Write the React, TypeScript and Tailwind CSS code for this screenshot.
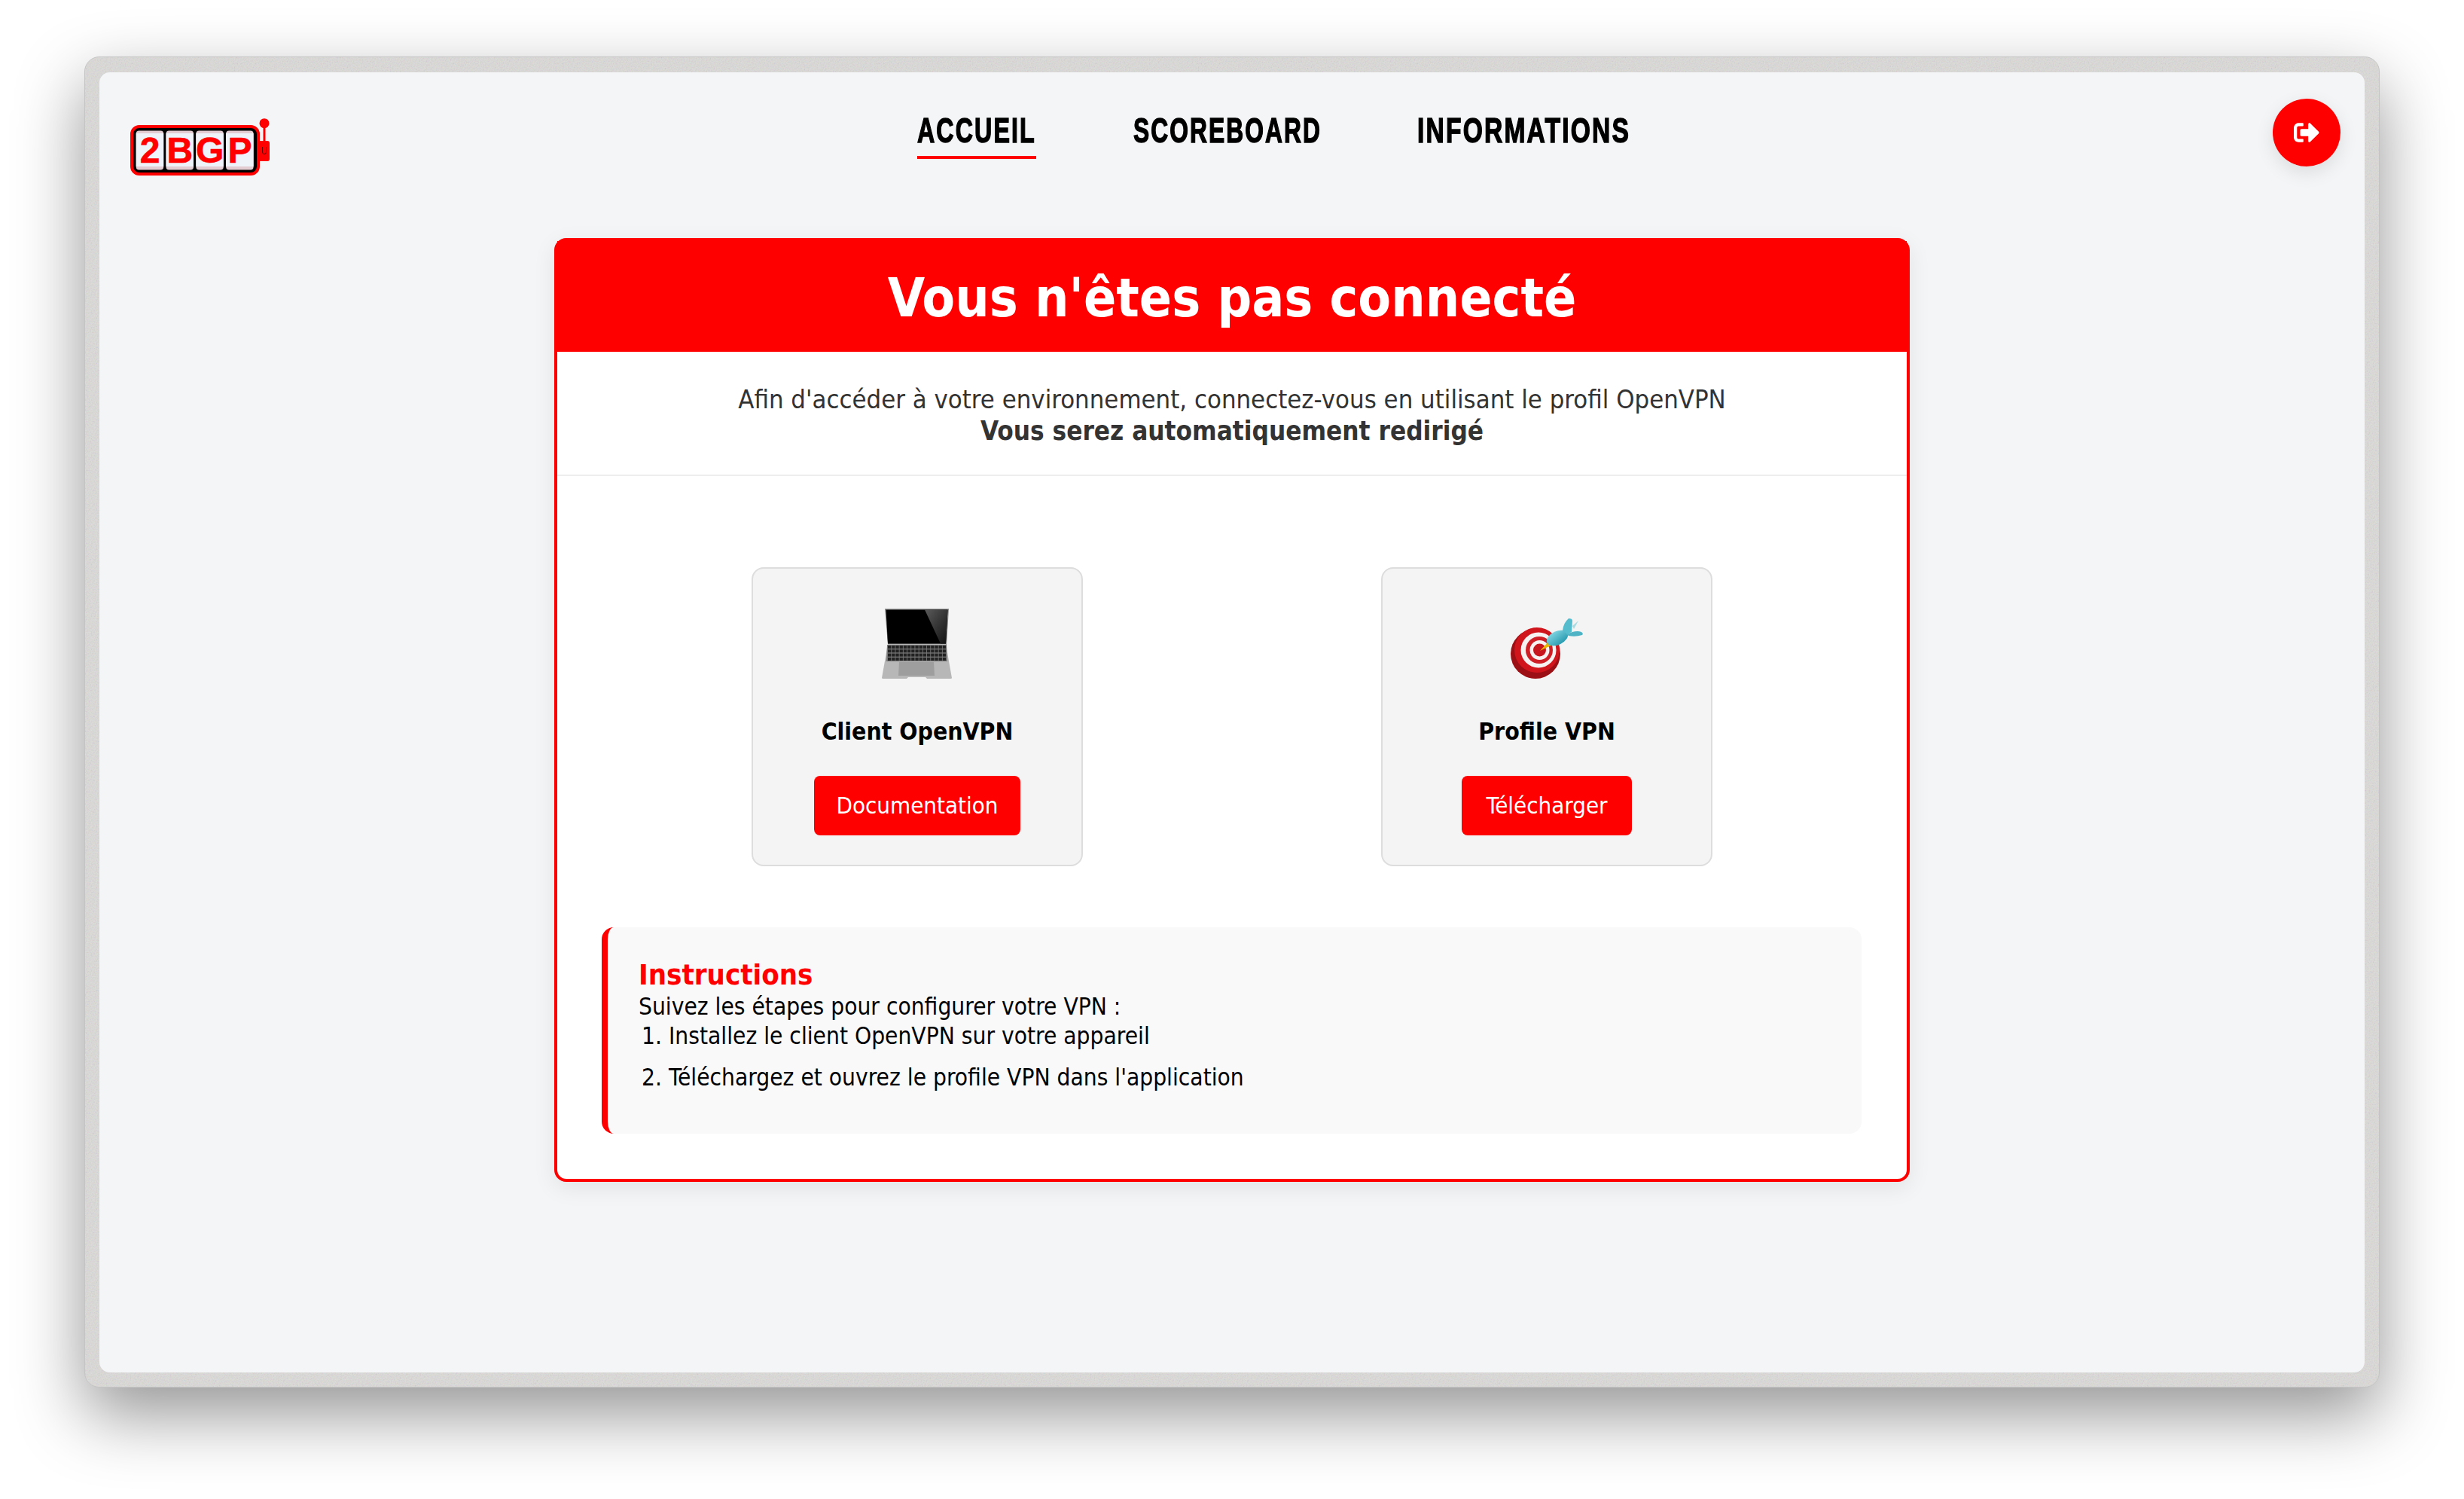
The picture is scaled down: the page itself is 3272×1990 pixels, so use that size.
import { FaSignOutAlt } from "react-icons/fa";

const keyRows = [0, 1, 2, 3];

const navItems = [
  { label: "ACCUEIL", width: "w-[158px]", scale: "scale-x-[0.7]", active: true },
  { label: "SCOREBOARD", width: "w-[248px]", scale: "scale-x-[0.69]", active: false },
  { label: "INFORMATIONS", width: "w-[281px]", scale: "scale-x-[0.73]", active: false },
];

function Logo() {
  return (
    <svg width="190" height="80" viewBox="0 0 190 80" className="mt-[61px]">
      <rect x="2" y="11" width="168" height="63" rx="10" fill="#000" stroke="#f00" strokeWidth="4" />
      {[0, 1, 2, 3].map((i) => (
        <g key={i}>
          <rect x={7.700 + i * 39.800} y="16.500" width="36.500" height="52" rx="4" fill="#e3ccd2" />
          <rect x={7.700 + i * 39.800} y="20" width="36.500" height="44" fill="#eef3f9" />
        </g>
      ))}
      {["2", "B", "G", "P"].map((c, i) => (
        <text key={c} x={26 + i * 39.800} y="58.700" textAnchor="middle" fontFamily="'Liberation Sans', sans-serif" fontWeight="700" fontSize="48" fill="#f00" stroke="#f00" strokeWidth="0.6">
          {c}
        </text>
      ))}
      <circle cx="178" cy="6.700" r="6.500" fill="#f00" />
      <rect x="176.500" y="9" width="3" height="22" fill="#f00" />
      <path d="M170 30h12a3 3 0 0 1 3 3v21a3 3 0 0 1-3 3h-12z" fill="#f00" />
      <path d="M175.500 38v7a2.500 2.500 0 0 0 5 0v-7" fill="none" stroke="#600" strokeWidth="1" />
    </svg>
  );
}

function Laptop() {
  return (
    <svg width="94" height="94" viewBox="0 0 94 94">
      <defs>
        <linearGradient id="glare" x1="0" y1="0" x2="1" y2="1">
          <stop offset="0" stopColor="#5a5a5a" />
          <stop offset="1" stopColor="#111" />
        </linearGradient>
      </defs>
      <path d="M4 0h85l-3 48H8z" fill="#8d8d8d" />
      <path d="M5.500 1.500h82l-2.500 45H8z" fill="#000" />
      <path d="M57 1.500h30.500l-2.500 45h-7z" fill="url(#glare)" />
      <path d="M8 47h77l8 45q0 1-2 1H60l-2-2H35l-2 2H2q-2 0-2-1z" fill="#b7b7b7" />
      <path d="M7 48h79l1 22H6z" fill="#777" />
      {keyRows.map((r) => (
        <g key={r}>
          {Array.from({ length: 15 }).map((_, i) => (
            <rect key={i} x={8 + i * 5.200} y={49 + r * 5.300} width="4.300" height="4" fill="#222" />
          ))}
        </g>
      ))}
      <path d="M23 71h46l1 18H22z" fill="#9e9e9e" />
    </svg>
  );
}

function Dart() {
  return (
    <svg width="96" height="82" viewBox="0 0 96 82">
      <defs>
        <linearGradient id="dartBody" x1="0" y1="0" x2="0.4" y2="1">
          <stop offset="0" stopColor="#8adbe6" />
          <stop offset="1" stopColor="#2f9fb4" />
        </linearGradient>
      </defs>
      <ellipse cx="33" cy="48" rx="33" ry="33" fill="#9c0f14" />
      <circle cx="35" cy="43" r="30" fill="#d0151d" />
      <circle cx="37" cy="43" r="23.500" fill="#f6f2f2" />
      <circle cx="38" cy="43" r="18" fill="#cf1f26" />
      <circle cx="38.500" cy="43" r="13" fill="#f6f2f2" />
      <circle cx="38.500" cy="43" r="8.500" fill="#c8161e" />
      <path d="M39 44L51 31l5 5-9 4z" fill="#e8b800" />
      <ellipse cx="62" cy="27" rx="15" ry="9" transform="rotate(-25 62 27)" fill="url(#dartBody)" />
      <path d="M82 11l8-7-6 11z" fill="#a9dbe3" />
      <path d="M69 17Q70 7 77 1q5 0 5 3l-1 15-6 3z" fill="#55bccd" />
      <path d="M74 22l8-3q7-2 12 0q3 2 1 4q-9 3-18 1z" fill="#4fb3c6" />
    </svg>
  );
}

function Tile(props: { title: string; action: string; icon: React.ReactNode; btnWidth: string }) {
  return (
    <div className="w-[440px] h-[397px] flex flex-col items-center rounded-[16px] border-2 border-[#ddd] bg-[#f4f4f4]">
      <div className="h-[147px] flex items-end">{props.icon}</div>
      <h3 className="mt-[50px] text-[31.700px] leading-[39px] font-bold text-black">{props.title}</h3>
      <button className={`mt-[39px] h-[79px] rounded-[8px] bg-[#f00] text-[31px] text-white ${props.btnWidth}`}>{props.action}</button>
    </div>
  );
}

export default function App() {
  return (
    <div className="min-h-[1990px] bg-white pt-[75px] pl-[112px] font-['DejaVu_Sans_Condensed','DejaVu_Sans',sans-serif]">
      <div className="relative w-[3048px] h-[1767px] px-[19px] pt-[20px] pb-[19px] rounded-[20px] bg-[#dddcda] border border-[#c4c4c4] shadow-[0_36px_90px_rgba(0,0,0,0.42)]">
        <svg className="absolute inset-0 w-full h-full rounded-[20px]" aria-hidden="true">
          <filter id="grain">
            <feTurbulence type="fractalNoise" baseFrequency="0.6" numOctaves="2" />
            <feColorMatrix type="saturate" values="0.7" />
          </filter>
          <rect width="100%" height="100%" rx="20" filter="url(#grain)" opacity="0.3" />
        </svg>
        <div className="relative h-full rounded-[14px] bg-[#f4f5f7]">
          <header className="h-[220px] flex justify-between items-start pl-[41px] pr-[32px]">
            <Logo />
            <nav className="flex gap-[129px] pt-[52px] font-['Liberation_Sans',sans-serif] font-bold text-[46px] leading-[50px] tracking-[3px] text-black [-webkit-text-stroke:1.500px_black]">
              {navItems.map((item) => (
                <a key={item.label} className={`block h-[63px] ${item.width} ${item.active ? "border-b-4 border-[#f00]" : ""}`}>
                  <span className={`block w-max origin-left ${item.scale}`}>{item.label}</span>
                </a>
              ))}
            </nav>
            <button className="mt-[35px] w-[90px] h-[90px] rounded-full bg-[#f00] flex items-center justify-center text-white shadow-[0_8px_24px_rgba(0,0,0,0.1)]">
              <FaSignOutAlt size={34} />
            </button>
          </header>

          <main className="mx-auto w-[1800px] h-[1253px] rounded-[16px] border-4 border-[#f00] bg-white shadow-[0_8px_30px_rgba(0,0,0,0.08)]">
            <div className="h-[147px] pt-1 bg-[#f00] flex items-center justify-center">
              <h1 className="text-[71px] leading-none font-bold text-white">Vous n'êtes pas connecté</h1>
            </div>
            <div className="h-[165px] border-b-2 border-[#eee] pt-[42px] text-center leading-[42px] text-[#333]">
              <p className="text-[34.400px]">Afin d'accéder à votre environnement, connectez-vous en utilisant le profil OpenVPN</p>
              <p className="text-[34.800px] font-bold">Vous serez automatiquement redirigé</p>
            </div>
            <div className="pl-[59px] pr-[60px] pt-[121px]">
              <div className="flex justify-between pl-[199px] pr-[198px]">
                <Tile title="Client OpenVPN" action="Documentation" icon={<Laptop />} btnWidth="w-[274px]" />
                <Tile title="Profile VPN" action="Télécharger" icon={<Dart />} btnWidth="w-[226px]" />
              </div>
              <section className="mt-[81px] h-[274px] rounded-[16px] border-l-8 border-[#f00] bg-[#f9f9f9] pl-[41px] pt-[40px] text-[31.400px] leading-[39px] text-black">
                <h2 className="text-[38px] leading-[46px] font-bold text-[#f00]">Instructions</h2>
                <p>Suivez les étapes pour configurer votre VPN :</p>
                <ol className="list-decimal pl-[40px]">
                  <li className="mb-[16px]">Installez le client OpenVPN sur votre appareil</li>
                  <li>Téléchargez et ouvrez le profile VPN dans l'application</li>
                </ol>
              </section>
            </div>
          </main>
        </div>
      </div>
    </div>
  );
}
